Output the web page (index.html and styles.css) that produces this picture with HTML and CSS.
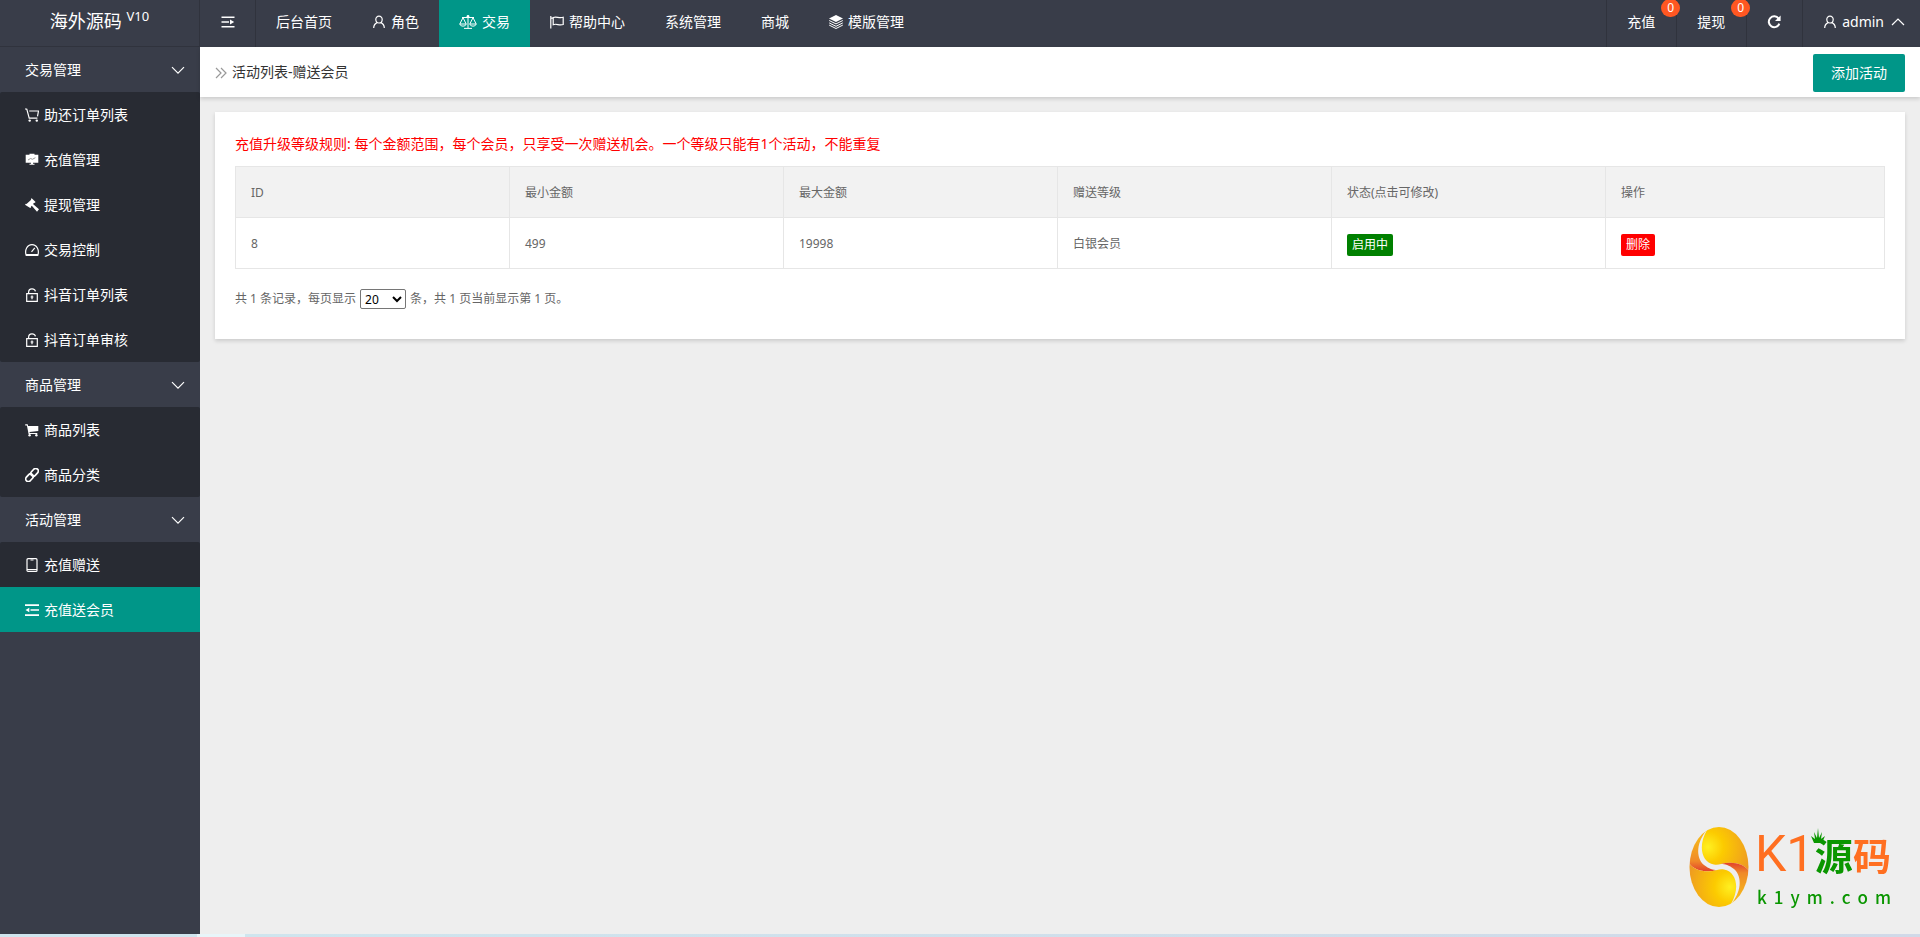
FILE: index.html
```html
<!DOCTYPE html>
<html lang="zh-CN">
<head>
<meta charset="utf-8">
<title>活动列表-赠送会员</title>
<link rel="stylesheet" href="styles.css">
</head>
<body>
<svg class="defs" aria-hidden="true">
  <symbol id="i-user" viewBox="0 0 14 14"><path class="ln" d="M7 1.2a3.2 3.2 0 0 1 3.2 3.3C10.200 6.600 8.800 8 7 8S3.800 6.600 3.800 4.500A3.200 3.200 0 0 1 7 1.200M5.200 7.600C3 8.600 1.700 10.600 1.700 13M8.800 7.600c2.200 1 3.500 3 3.500 5.400"/></symbol>
  <symbol id="i-fold" viewBox="0 0 14 14"><path d="M0.500 1.500h13v1.600h-13zM0.500 11h13v1.600h-13zM0.500 6.200h7.500v1.600h-7.500zM9 4.500l4.200 2.500L9 9.500z"/></symbol>
  <symbol id="i-indent" viewBox="0 0 14 14"><path d="M0 1.200h14v1.700H0zM0 11.200h14v1.700H0zM5.500 6.200H14v1.600H5.500zM0.500 7l3.800-2.300v4.600z"/></symbol>
  <symbol id="i-scale" viewBox="0 0 18 14"><path class="fine" d="M9 1v12M5 13.400h8M3 2.500h12M4 2.700L.8 9h6.400L4 2.700M14 2.700L10.800 9h6.400L14 2.700M.8 9c.4 2.800 6 2.800 6.400 0M10.800 9c.4 2.800 6 2.800 6.400 0"/><circle cx="9" cy="1.500" r="1.400"/></symbol>
  <symbol id="i-flag" viewBox="0 0 14 14"><path class="ln" d="M.8 1v12.500M1 3.200h2.200M3.200 2.500v7.200c3.600-1.600 5.400 1.300 10-.2V2.300c-4.600 1.500-6.400-1.400-10 .2z"/></symbol>
  <symbol id="i-stack" viewBox="0 0 14 14"><path d="M7 0l7 3.500-7 3.500-7-3.500z"/><path class="fine" d="M.2 5.500L7 8.900l6.800-3.400M.2 7.900L7 11.300l6.800-3.400M.2 10.100L7 13.500l6.800-3.400"/></symbol>
  <symbol id="i-refresh" viewBox="0 0 14 14"><path class="thick" d="M11.600 3.600A5.400 5.400 0 1 0 12.300 8.600"/><path d="M13.600.5v5.600H8z"/></symbol>
  <symbol id="i-down" viewBox="0 0 14 14"><path class="ln" d="M1 4.200l6 6 6-6"/></symbol>
  <symbol id="i-up" viewBox="0 0 14 14"><path class="ln" d="M1 10l6-6 6 6"/></symbol>
  <symbol id="i-more" viewBox="0 0 12 14"><path class="ln" d="M1 2l5 5-5 5M6 2l5 5-5 5"/></symbol>
  <symbol id="i-cart" viewBox="0 0 14 14"><path class="ln" d="M.2.800l1.600.4 2.400 9h8.200M4.200 3h9.300l-1 5.300"/><circle cx="4.700" cy="12.600" r="1.200"/><circle cx="11.800" cy="12.600" r="1.200"/></symbol>
  <symbol id="i-board" viewBox="0 0 14 14"><path d="M4.500.8h5v1h3.800v8H8v1h1.500v1h-5v-1H6v-1H.7v-8h3.800z"/><path class="cut" d="M3 7l2.600-1.500 1.800.8 3-1.600"/></symbol>
  <symbol id="i-gavel" viewBox="0 0 14 14"><path d="M6.700.2l3.900 3.900-.9.900-.5-.2-1.200 1.300 6 5.200-2 2.500-5.200-6-.9.900.2.500-.9.900L0 6.700l.9-.9.600.1L6.200 1.700 5.800 1z"/></symbol>
  <symbol id="i-gauge" viewBox="0 0 14 14"><path class="ln" d="M1.200 12.300C-.6 7 2.200 1.600 7 1.600s7.600 5.400 5.800 10.700zM6.500 8.900l3.300-4"/><path d="M1 11h12v1.900H1z"/></symbol>
  <symbol id="i-lock" viewBox="0 0 14 14"><path class="ln" d="M1.700 5.700h10.600v7.600H1.700zM3.600 5.700V4.200c0-4.400 6.600-4.400 6.800-.8M7 7.500v3.800M5.600 9h2.800"/></symbol>
  <symbol id="i-cartfull" viewBox="0 0 14 14"><path d="M.2 1.300h2.500L3.100 3H13.300v4.900L4.500 9l.2.900h7.600v1H3.600L1.900 2.500H.2z"/><circle cx="4.600" cy="12.300" r="1.200"/><circle cx="11.400" cy="12.300" r="1.200"/></symbol>
  <symbol id="i-link" viewBox="0 0 14 14"><g transform="rotate(-47 7 7)"><rect class="mid" x="-1" y="4.400" width="8.600" height="5.200" rx="2.600"/><rect class="mid" x="6.400" y="4.400" width="8.600" height="5.200" rx="2.600"/></g></symbol>
  <symbol id="i-phone" viewBox="0 0 14 14"><rect class="ln" x="2" y=".7" width="10" height="12.700" rx="1"/><path class="fine" d="M2 11.500h10M5.500 2h3"/></symbol>
</svg>

<div class="app">
  <header class="topbar">
    <a class="brand" href="#">海外源码 <sup>V10</sup></a>
    <button class="fold" type="button" aria-label="折叠菜单"><svg class="ic"><use href="#i-fold"/></svg></button>
    <nav class="nav">
      <a href="#">后台首页</a>
      <a href="#"><svg class="ic"><use href="#i-user"/></svg>角色</a>
      <a href="#" class="on"><svg class="ic wide"><use href="#i-scale"/></svg>交易</a>
      <a href="#"><svg class="ic"><use href="#i-flag"/></svg>帮助中心</a>
      <a href="#">系统管理</a>
      <a href="#">商城</a>
      <a href="#"><svg class="ic"><use href="#i-stack"/></svg>模版管理</a>
    </nav>
    <nav class="tools">
      <a href="#">充值<span class="badge">0</span></a>
      <a href="#">提现<span class="badge">0</span></a>
      <a href="#" aria-label="刷新"><svg class="ic"><use href="#i-refresh"/></svg></a>
      <a href="#" class="account"><svg class="ic"><use href="#i-user"/></svg>admin<svg class="ic caret"><use href="#i-up"/></svg></a>
    </nav>
  </header>

  <aside class="side">
    <button class="group" type="button">交易管理<svg class="ic"><use href="#i-down"/></svg></button>
    <div class="sub">
      <a href="#"><svg class="ic"><use href="#i-cart"/></svg>助还订单列表</a>
      <a href="#"><svg class="ic"><use href="#i-board"/></svg>充值管理</a>
      <a href="#"><svg class="ic"><use href="#i-gavel"/></svg>提现管理</a>
      <a href="#"><svg class="ic"><use href="#i-gauge"/></svg>交易控制</a>
      <a href="#"><svg class="ic"><use href="#i-lock"/></svg>抖音订单列表</a>
      <a href="#"><svg class="ic"><use href="#i-lock"/></svg>抖音订单审核</a>
    </div>
    <button class="group" type="button">商品管理<svg class="ic"><use href="#i-down"/></svg></button>
    <div class="sub">
      <a href="#"><svg class="ic"><use href="#i-cartfull"/></svg>商品列表</a>
      <a href="#"><svg class="ic"><use href="#i-link"/></svg>商品分类</a>
    </div>
    <button class="group" type="button">活动管理<svg class="ic"><use href="#i-down"/></svg></button>
    <div class="sub">
      <a href="#"><svg class="ic"><use href="#i-phone"/></svg>充值赠送</a>
      <a href="#" class="on"><svg class="ic"><use href="#i-indent"/></svg>充值送会员</a>
    </div>
  </aside>

  <main class="main">
    <div class="title">
      <svg class="ic more"><use href="#i-more"/></svg>
      <h1>活动列表-赠送会员</h1>
      <button class="add" type="button">添加活动</button>
    </div>
    <section class="card">
      <p class="rule">充值升级等级规则: 每个金额范围，每个会员，只享受一次赠送机会。一个等级只能有1个活动，不能重复</p>
      <table class="list">
        <colgroup><col span="5" class="col"><col></colgroup>
        <thead>
          <tr><th>ID</th><th>最小金额</th><th>最大金额</th><th>赠送等级</th><th>状态(点击可修改)</th><th>操作</th></tr>
        </thead>
        <tbody>
          <tr><td>8</td><td>499</td><td>19998</td><td>白银会员</td><td><a class="tag ok" href="#">启用中</a></td><td><a class="tag del" href="#">删除</a></td></tr>
        </tbody>
      </table>
      <div class="pager">
        <label for="size">共 1 条记录，每页显示</label>
        <select id="size"><option>20</option><option>50</option></select>
        <span>条，共 1 页当前显示第 1 页。</span>
      </div>
    </section>
  </main>
  <div class="strip"></div>
</div>

<div class="mark">
  <svg class="egg" viewBox="0 0 60 80" aria-hidden="true">
    <defs>
      <clipPath id="oval"><ellipse cx="30" cy="40" rx="29.500" ry="40"/></clipPath>
      <radialGradient id="gold" gradientUnits="userSpaceOnUse" cx="19" cy="20" r="44"><stop offset="0" stop-color="#fff021"/><stop offset=".35" stop-color="#fccb00"/><stop offset="1" stop-color="#ee9a22"/></radialGradient>
      <linearGradient id="fire" x2="0" y2="1"><stop offset=".2" stop-color="#f6b51b"/><stop offset=".75" stop-color="#f08a28"/><stop offset="1" stop-color="#e2402c"/></linearGradient>
      <g id="half">
        <path fill="url(#gold)" d="M18 3C9 18 12 35 25 37.500 28 38 30 37.500 32 37 42 34 55 36 60 44V-2H18z"/>
        <path fill="url(#fire)" d="M18 3C8 14 6 30 15 38c5 4 9 5 13 5C18 46 5 44 0 36V3z"/>
      </g>
    </defs>
    <g clip-path="url(#oval)">
      <use href="#half"/>
      <use href="#half" transform="rotate(180 30 40)"/>
    </g>
  </svg>
  <div class="words">
    <div class="big"><span class="k1">K1</span><span class="yuan">源<svg class="crown" viewBox="0 0 14 16" aria-hidden="true"><path d="M3 15L0 8l4 3-1-7 3 6L7 0l1 10 3-6-1 7 4-3-3 7z"/></svg></span><span class="ma">码</span></div>
    <div class="url"><span>k</span><span>1</span><span>y</span><span>m</span><span>.</span><span>c</span><span>o</span><span>m</span></div>
  </div>
</div>
</body>
</html>
```

FILE: styles.css
```css
* { box-sizing: border-box; }
body {
  margin: 0;
  background: #eee;
  color: #333;
  font: 14px/20px "Noto Sans", "Noto Sans CJK SC", sans-serif;
}
a { color: inherit; text-decoration: none; }
button { border: 0; font: inherit; color: inherit; background: none; cursor: pointer; }
.defs { display: none; }
.ic { width: 14px; height: 14px; flex: none; fill: currentColor; }
.ln { fill: none; stroke: currentColor; stroke-width: 1.2; }
.fine { fill: none; stroke: currentColor; stroke-width: 1; }
.mid { fill: none; stroke: currentColor; stroke-width: 1.7; }
.thick { fill: none; stroke: currentColor; stroke-width: 2; }
.cut { fill: none; stroke: #999; stroke-width: 1; }

.app {
  display: grid;
  grid-template: 47px 1fr 3px / 200px 1fr;
  min-height: 100vh;
}

.topbar {
  grid-column: 1 / -1;
  display: flex;
  background: #393d49;
  color: #fff;
}
.brand {
  width: 200px;
  padding-top: 7px;
  text-align: center;
  font-size: 18px;
  line-height: 28px;
  border-right: 1px solid #30333d;
  border-bottom: 1px solid #30333d;
  white-space: nowrap;
}
.brand sup { font-size: 13px; line-height: 12px; }
.fold {
  display: flex;
  align-items: center;
  width: 56px;
  padding: 0 20px 3px 21px;
  border-right: 1px solid #30333d;
}
.nav, .tools { display: flex; }
.nav a, .tools a {
  display: flex;
  align-items: center;
  gap: 5px;
  padding: 0 20px 4px;
  white-space: nowrap;
}
.nav .on, .sub .on { background: #009688; }
.wide { width: 18px; }
.tools { margin-left: auto; }
.tools a { position: relative; padding-right: 21px; border-left: 1px solid #30333d; }
.tools .account { padding-right: 15px; }
.account .caret { margin-left: 2px; }
.badge {
  position: absolute;
  top: -1px;
  right: -4px;
  z-index: 1;
  padding: 0 6px;
  border-radius: 9px;
  background: #ff5722;
  font-size: 12px;
  line-height: 18px;
}

.side { background: #393d49; color: #fff; }
.group {
  display: flex;
  align-items: center;
  justify-content: space-between;
  width: 100%;
  height: 45px;
  padding: 0 15px 0 25px;
}
.sub { background: #282b33; border-radius: 2px; }
.sub a {
  display: flex;
  align-items: center;
  gap: 5px;
  height: 45px;
  padding-left: 25px;
}

.main { min-width: 0; }
.title {
  display: flex;
  align-items: center;
  height: 50px;
  padding: 2px 15px 0;
  background: #fff;
  box-shadow: 0 2px 4px rgba(0, 0, 0, .15);
}
.more { width: 12px; color: #999; }
.title h1 { margin: 0 0 2px 5px; font-size: 14px; font-weight: 400; }
.add {
  height: 38px;
  margin-left: auto;
  padding: 0 18px;
  border-radius: 2px;
  background: #009688;
  color: #fff;
}
.card {
  margin: 15px;
  padding: 22px 20px 30px;
  background: #fff;
  box-shadow: 0 2px 4px rgba(0, 0, 0, .15);
}
.rule { margin: 0 0 12px; color: #f00; }
.list {
  width: 100%;
  table-layout: fixed;
  border-collapse: collapse;
  color: #666;
  font-size: 12px;
}
.col { width: 274px; }
.list th, .list td {
  height: 51px;
  padding: 2px 15px 0;
  border: 1px solid #e6e6e6;
  text-align: left;
  font-weight: 400;
}
.list th { background: #f2f2f2; }
.tag {
  display: inline-block;
  margin-top: 2px;
  padding: 0 5px;
  border-radius: 2px;
  color: #fff;
  line-height: 22px;
}
.ok { background: #008000; }
.del { background: #f00; }
.pager {
  display: flex;
  align-items: center;
  gap: 4px;
  margin-top: 20px;
  color: #666;
  font-size: 12px;
}
.pager select {
  width: 46px;
  height: 20px;
  padding: 0;
  border: 1px solid #767676;
  border-radius: 2px;
  background: #fff;
  font: inherit;
  color: #000;
}
.strip {
  grid-column: 1 / -1;
  background: linear-gradient(90deg, #cfe5ee 197px, #e8f5f9 197px 245px, #cfe5ee 245px, #d0d9e8);
}

.mark {
  position: fixed;
  right: 29px;
  bottom: 27px;
  display: flex;
  align-items: center;
  gap: 6px;
}
.egg { width: 60px; height: 80px; }
.words { width: 136px; color: #0a9600; }
.big { display: flex; align-items: center; justify-content: space-between; }
.big .k1 { font: 400 50px/60px Roboto, sans-serif; color: #ff6f21; }
.yuan, .ma { font: 700 38px/60px "Noto Sans CJK SC", sans-serif; }
.yuan { position: relative; }
.ma { color: #ff6f21; }
.crown { position: absolute; left: -4px; top: 4px; width: 14px; height: 16px; fill: #0a9600; }
.url {
  display: flex;
  justify-content: space-between;
  padding-left: 2px;
  font: 500 17px/26px "Noto Sans CJK SC", sans-serif;
}
```
